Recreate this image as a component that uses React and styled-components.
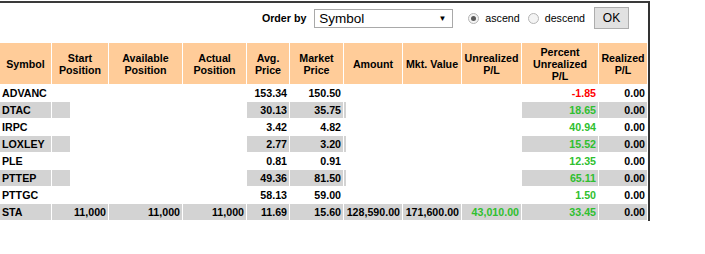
import styled, { createGlobalStyle } from 'styled-components'

const GlobalStyle = createGlobalStyle`
body {
  margin: 0;
  background: #fff;
  font-family: "Liberation Sans", Arial, sans-serif;
}
`

const Panel = styled.div`
width: 648px;
margin-top: 1px;
border-top: 2px solid #3a3a3a;
border-right: 2px solid #333;
`

const Toolbar = styled.div`
height: 39px;
box-sizing: border-box;
padding: 4px 19px 0 0;
display: flex;
justify-content: flex-end;
align-items: flex-start;
`

const Bar = styled.div`
display: flex;
align-items: center;
height: 22px;
`

const OrderLabel = styled.span`
font-size: 8pt;
font-weight: bold;
color: #000;
margin-right: 8px;
`

const Select = styled.div`
width: 139px;
height: 19px;
box-sizing: border-box;
border: 1px solid #a9a9a9;
background: #fff;
display: flex;
align-items: center;
justify-content: space-between;
padding: 0 6px 0 4px;
font-size: 13.5px;
color: #000;
margin-right: 15px;
`

const Arrow = styled.span`
font-size: 8px;
color: #000;
`

const Radio = styled.span`
width: 11px;
height: 11px;
box-sizing: border-box;
border-radius: 50%;
border: 1px solid #b5b5b5;
background: #f4f4f4;
display: flex;
align-items: center;
justify-content: center;
margin-right: 6px;
&::after {
  content: "";
  width: 5px;
  height: 5px;
  border-radius: 50%;
  background: ${p => (p.$checked ? '#5a5a5a' : 'transparent')};
}
`

const RadioText = styled.span`
font-size: 8pt;
color: #000;
margin-right: ${p => p.$gap}px;
`

const OkButton = styled.div`
width: 35px;
height: 22px;
box-sizing: border-box;
border: 1px solid #adadad;
background: #e1e1e1;
font-size: 12px;
display: flex;
align-items: center;
justify-content: center;
color: #000;
`

const Table = styled.table`
table-layout: fixed;
border-collapse: separate;
border-spacing: 1px;
width: 649px;
margin-left: -1px;
font-size: 8pt;
font-weight: bold;
`

const Head = styled.th`
background: #ffcc99;
height: 41px;
padding: 0 1px;
text-align: center;
vertical-align: middle;
line-height: 12px;
color: #000;
white-space: nowrap;
`

const Cell = styled.td`
height: 16px;
padding: 0 2px;
line-height: 16px;
white-space: nowrap;
text-align: ${p => (p.$left ? 'left' : 'right')};
color: ${p => (p.$tone === 'red' ? '#ff0000' : p.$tone === 'green' ? '#2fbf2f' : '#000')};
background: ${p =>
    p.$fill === true
      ? '#d3d3d3'
      : p.$fill
        ? `linear-gradient(to right, #d3d3d3 ${p.$fill}px, transparent ${p.$fill}px)`
        : 'transparent'};
`

const widths = [51, 56, 73, 63, 42, 53, 58, 58, 59, 76, 48]

const heads = [
  ['Symbol'], ['Start', 'Position'], ['Available', 'Position'], ['Actual', 'Position'], ['Avg.', 'Price'],
  ['Market', 'Price'], ['Amount'], ['Mkt. Value'], ['Unrealized', 'P/L'], ['Percent', 'Unrealized', 'P/L'],
  ['Realized', 'P/L'],
]

const rows = [
  ['ADVANC', '153.34', '150.50', '-1.85'],
  ['DTAC', '30.13', '35.75', '18.65'],
  ['IRPC', '3.42', '4.82', '40.94'],
  ['LOXLEY', '2.77', '3.20', '15.52'],
  ['PLE', '0.81', '0.91', '12.35'],
  ['PTTEP', '49.36', '81.50', '65.11'],
  ['PTTGC', '58.13', '59.00', '1.50'],
]

const Row = ({ data, striped }) => {
  const [sym, avg, mkt, pct] = data
  const s = striped
  return (
    <tr>
      <Cell $left $fill={s}>{sym}</Cell>
      <Cell $fill={s ? 18 : false}></Cell>
      <Cell></Cell>
      <Cell></Cell>
      <Cell $fill={s}>{avg}</Cell>
      <Cell $fill={s}>{mkt}</Cell>
      <Cell $fill={s ? 2 : false}></Cell>
      <Cell></Cell>
      <Cell></Cell>
      <Cell $fill={s} $tone={pct.startsWith('-') ? 'red' : 'green'}>{pct}</Cell>
      <Cell $fill={s}>0.00</Cell>
    </tr>
  )
}

const App = () => {
  return (
    <>
      <GlobalStyle />
      <Panel>
        <Toolbar>
          <Bar>
            <OrderLabel>Order by</OrderLabel>
            <Select>
              <span>Symbol</span>
              <Arrow>▼</Arrow>
            </Select>
            <Radio $checked />
            <RadioText $gap={8}>ascend</RadioText>
            <Radio />
            <RadioText $gap={9}>descend</RadioText>
            <OkButton>OK</OkButton>
          </Bar>
        </Toolbar>
        <Table>
          <colgroup>
            {widths.map((w, i) => <col key={i} style={{ width: w }} />)}
          </colgroup>
          <thead>
            <tr>
              {heads.map(h => (
                <Head key={h.join(' ')}>
                  {h.map((line, i) => (
                    <span key={line}>{i > 0 && <br />}{line}</span>
                  ))}
                </Head>
              ))}
            </tr>
          </thead>
          <tbody>
            {rows.map((r, i) => <Row key={r[0]} data={r} striped={i % 2 === 1} />)}
            <tr>
              <Cell $left $fill>STA</Cell>
              <Cell $fill>11,000</Cell>
              <Cell $fill>11,000</Cell>
              <Cell $fill>11,000</Cell>
              <Cell $fill>11.69</Cell>
              <Cell $fill>15.60</Cell>
              <Cell $fill>128,590.00</Cell>
              <Cell $fill>171,600.00</Cell>
              <Cell $fill $tone="green">43,010.00</Cell>
              <Cell $fill $tone="green">33.45</Cell>
              <Cell $fill>0.00</Cell>
            </tr>
          </tbody>
        </Table>
      </Panel>
    </>
  )
}

export default App
